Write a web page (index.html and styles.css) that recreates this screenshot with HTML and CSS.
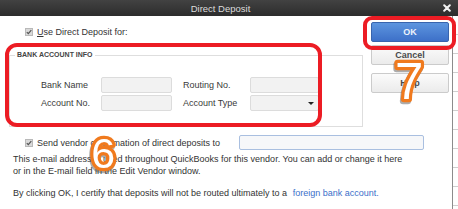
FILE: index.html
```html
<!DOCTYPE html>
<html>
<head>
<meta charset="utf-8">
<link rel="stylesheet" href="styles.css">
</head>
<body>
<div class="page">
  <div class="titlebar">
    <div class="title">Direct Deposit</div>
    <div class="close"><svg width="8" height="8" viewBox="0 0 8 8"><path d="M1.2 1.2 L6.8 6.8 M6.8 1.2 L1.2 6.8" stroke="#f2f2f2" stroke-width="2" stroke-linecap="round"/></svg></div>
  </div>
  <div class="frame">
    <div class="window">
      <div class="top">
        <div class="left">
          <div class="check-row">
            <span class="cb"><svg width="8" height="8" viewBox="0 0 8 8"><rect x="0.5" y="0.5" width="7" height="7" fill="#d9d9d9" stroke="#b9b9b9"/><path d="M1.8 4.2 L3.3 5.7 L6.3 2.2" fill="none" stroke="#555" stroke-width="1.2"/></svg></span>
            <span><u>U</u>se Direct Deposit for:</span>
          </div>
          <fieldset class="group">
            <legend>BANK ACCOUNT INFO</legend>
            <div class="fields">
              <span class="lbl">Bank Name</span>
              <span class="inp"></span>
              <span class="lbl">Routing No.</span>
              <span class="inp"></span>
              <span class="lbl">Account No.</span>
              <span class="inp"></span>
              <span class="lbl">Account Type</span>
              <span class="inp select"><span class="arrow"></span></span>
            </div>
          </fieldset>
        </div>
        <div class="buttons">
          <button class="btn primary">OK</button>
          <button class="btn cancel">Cancel</button>
          <button class="btn help">Help</button>
        </div>
      </div>
      <div class="send">
        <span class="cb"><svg width="8" height="8" viewBox="0 0 8 8"><rect x="0.5" y="0.5" width="7" height="7" fill="#d9d9d9" stroke="#b9b9b9"/><path d="M1.8 4.2 L3.3 5.7 L6.3 2.2" fill="none" stroke="#555" stroke-width="1.2"/></svg></span>
        <span class="send-text">Send vendor confirmation of direct deposits to</span>
        <span class="email"></span>
      </div>
      <p class="note">This e-mail address is used throughout QuickBooks for this vendor. You can add or change it here<br>or in the E-mail field in the Edit Vendor window.</p>
      <p class="certify">By clicking OK, I certify that deposits will not be routed ultimately to a <a class="link">foreign bank account.</a></p>
    </div>
    <div class="edge"></div>
  </div>
  <div class="mark mark-info"></div>
  <div class="mark mark-ok"></div>
  <svg class="num num6" width="36" height="46" viewBox="0 0 36 46"><text x="2.2" y="38" class="num-text" font-size="43">6</text></svg>
  <svg class="num num7" width="38" height="52" viewBox="0 0 38 52"><text x="3" y="43" class="num-text" font-size="51">7</text></svg>
</div>
</body>
</html>
```
FILE: styles.css
```css
html, body {
  margin: 0;
  padding: 0;
  background: #ffffff;
}
body {
  font-family: "Liberation Sans", Arial, sans-serif;
  font-size: 9px;
  color: #333333;
  width: 458px;
  height: 209px;
  overflow: hidden;
}
.page {
  position: relative;
  width: 458px;
  height: 209px;
  display: flex;
  flex-direction: column;
}
.titlebar {
  height: 16px;
  flex: none;
  display: flex;
  align-items: center;
  background: linear-gradient(#424242, #2c2c2c);
}
.title {
  flex: 1;
  text-align: center;
  color: #dcdcdc;
  font-size: 9.5px;
}
.close {
  width: 12px;
  margin-right: 5px;
  display: flex;
  justify-content: center;
  align-items: center;
}
.frame {
  flex: 1;
  display: flex;
}
.window {
  width: 452px;
  flex: none;
  border-right: 1px solid #8c8c8c;
}
.edge {
  flex: 1;
  background: repeating-linear-gradient(to bottom, #ffffff 0 18px, #cfcfcf 18px 19px);
}
.top {
  display: flex;
}
.left {
  width: 363px;
}
.check-row {
  margin-top: 11px;
  height: 9px;
  padding-left: 25px;
  display: flex;
  align-items: center;
  gap: 4px;
}
.cb {
  display: flex;
  width: 8px;
  height: 8px;
}
.group {
  margin: 15px 0 0 9px;
  width: 354px;
  min-width: 0;
  box-sizing: border-box;
  border: 1px solid #dedede;
  padding: 18px 0 15px 0;
}
.group legend {
  margin-left: 5px;
  padding: 0 2px;
  font-size: 7px;
  line-height: 8px;
  font-weight: bold;
  color: #444444;
}
.fields {
  margin-left: 31px;
  display: grid;
  grid-template-columns: 60px 71px 78px 69px;
  grid-auto-rows: 16px;
  row-gap: 2px;
  align-items: center;
}
.fields .lbl:nth-child(3), .fields .lbl:nth-child(7) {
  padding-left: 11px;
}
.lbl {
  color: #3a3a3a;
}
.inp {
  height: 16px;
  box-sizing: border-box;
  background: #f2f2f2;
  border: 1px solid #dcdcdc;
  border-radius: 2px;
}
.select {
  display: flex;
  align-items: center;
  justify-content: flex-end;
  padding-right: 4px;
}
.arrow {
  width: 0;
  height: 0;
  border-left: 3px solid transparent;
  border-right: 3px solid transparent;
  border-top: 3px solid #222222;
}
.buttons {
  margin-left: 8px;
  margin-top: 6px;
  width: 78px;
  display: flex;
  flex-direction: column;
}
.btn {
  height: 20px;
  width: 78px;
  box-sizing: border-box;
  font-family: "Liberation Sans", Arial, sans-serif;
  font-size: 9px;
  font-weight: bold;
  color: #4a4a4a;
  border: 1px solid #cbcbcb;
  border-radius: 2px;
  background: linear-gradient(#fbfbfb, #ebebeb);
  padding: 0;
}
.primary {
  background: linear-gradient(#5d95df, #3d70c8);
  border-color: #3964ad;
  color: #eef3fb;
}
.cancel {
  margin-top: 3px;
}
.help {
  margin-top: 8px;
}
.send {
  margin-top: 8px;
  height: 15px;
  padding-left: 25px;
  display: flex;
  align-items: center;
}
.send-text {
  margin-left: 4px;
  width: 202px;
}
.email {
  width: 185px;
  height: 15px;
  box-sizing: border-box;
  border: 1px solid #a9bfe0;
  border-radius: 2px;
  background: #f6f7f9;
}
.note {
  margin: 3px 0 0 0;
  padding-left: 13px;
  line-height: 12px;
}
.certify {
  margin: 10px 0 0 0;
  padding-left: 13px;
  line-height: 12px;
}
.link {
  margin-left: 3px;
  color: #3c6fca;
}
.mark {
  position: absolute;
  box-sizing: border-box;
  border: 4px solid #ec1c24;
}
.mark-info {
  left: 5px;
  top: 43px;
  width: 317px;
  height: 84px;
  border-radius: 12px;
}
.mark-ok {
  left: 363px;
  top: 16px;
  width: 93px;
  height: 34px;
  border-radius: 9px;
}
.num {
  position: absolute;
  overflow: visible;
  filter: drop-shadow(-1px 2px 0 rgba(70, 70, 70, 0.45));
}
.num-text {
  font-family: "Liberation Sans", Arial, sans-serif;
  fill: #ffffff;
  stroke: #f07a1e;
  stroke-width: 6.5px;
  stroke-linejoin: round;
  paint-order: stroke;
}
.num6 {
  left: 89px;
  top: 130px;
}
.num7 {
  left: 392px;
  top: 56px;
}
```
